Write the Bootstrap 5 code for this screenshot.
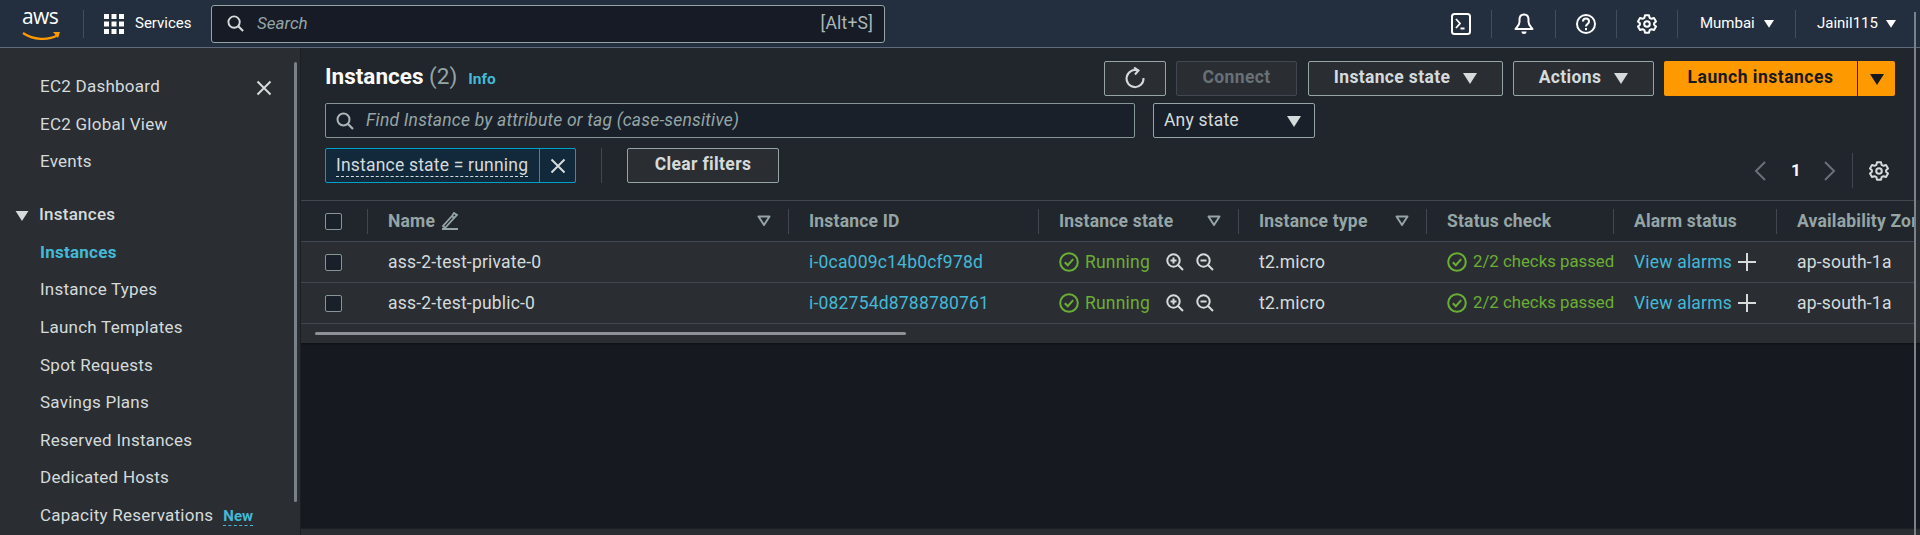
<!DOCTYPE html>
<html lang="en"><head><meta charset="utf-8"><title>Instances</title>
<link href="https://cdn.jsdelivr.net/npm/bootstrap@5.3.0/dist/css/bootstrap.min.css" rel="stylesheet">
<style>
html,body{height:535px;overflow:hidden;background:#16191f}
body{font-family:Roboto,"Liberation Sans",sans-serif;font-size:17.5px;letter-spacing:.2px;color:#d5dbdb;display:flex;flex-direction:column;position:relative}
svg{display:block;flex:none}
.topbar{height:48px;flex:none;background:#232f3e;border-bottom:1px solid #5f6b7a;padding:0;color:#fff;flex-wrap:nowrap;justify-content:flex-start}
.logo-cell{width:84px;height:28px;border-right:1px solid #414d5c;padding-left:22px;position:relative}
.aws-word{font:500 21px/19px "Open Sans","Liberation Sans",sans-serif;letter-spacing:-.6px;color:#fff;display:block;margin-top:-3px}
.swoosh{position:absolute;left:22px;top:21px}
.svc{margin-left:20px;width:107px;font-size:15px;letter-spacing:0;gap:11px}
.search-top{width:674px;height:38px;background:#161b26;border:1px solid #95a5a6;border-radius:3px;padding:0 11px 0 15px;gap:13px}
.ph{font-style:italic;color:#95a5a6}
.search-top .ph{font-size:17px;letter-spacing:0}
.hint{margin-left:auto;color:#aab7b8;font-size:17.5px}
.right-nav{margin-left:auto;height:28px}
.nav-cell{height:28px;width:62px;border-right:1px solid #414d5c}
.nav-cell.c2{width:64px}.nav-cell.c3,.nav-cell.c4{width:61px}
.region{width:118px;padding-left:22px;gap:9px;font-size:15px;letter-spacing:0;border-right:1px solid #414d5c;height:28px}
.acct{width:124px;padding-left:21px;gap:8px;font-size:15px;letter-spacing:0;height:28px}
.shell{flex:1;min-height:0;overflow:hidden}
.sidenav{width:300px;flex:none;background:#2a2e33;padding:20px 0 0 40px;position:relative;font-size:17px;letter-spacing:.25px;color:#d5dbdb}
.side-item{height:37.6px;line-height:37.6px;white-space:nowrap}
.side-gap{height:15.5px}
.side-head{margin-left:-25px;font-weight:500;gap:10px;display:flex;align-items:center}
.side-on{color:#44b9d6;font-weight:700}
.tag-new{color:#44b9d6;font-weight:700;font-size:15px;border-bottom:1px dashed #44b9d6;margin-left:10px;line-height:17px;display:inline-block;letter-spacing:0}
.side-x{position:absolute;left:256px;top:32px}
.side-rail{position:absolute;left:294px;top:14px;width:3px;height:440px;background:#7b8188;border-radius:2px}
.work{flex:1;min-width:0;background:#16191f;border-left:1px solid #1b1f26;position:relative;overflow:hidden}
.panel{background:#21252c;height:295px;overflow:hidden;box-shadow:0 1px 2px #0006}
.tools{padding:13px 25px 0 24px}
.h-row{height:35px}
.h-title{font-size:22.5px;font-weight:700;color:#fafafa;margin:0;height:35px;line-height:31px;letter-spacing:0}
.h-count{font-weight:400;color:#95a5a6}
.h-info{color:#44b9d6;font-weight:700;font-size:15.5px;margin-left:11px}
.act{height:35px;border:1px solid #95a5a6;border-radius:2px;background:#2a2e33;color:#d5dbdb;font-weight:700;font-size:17.5px;letter-spacing:.35px;padding:0 0 2px;display:flex;align-items:center;justify-content:center;gap:13px}
.act:disabled{border-color:#414750;color:#687078;opacity:1;background:#2a2e33}
.w-ref{width:62px;margin-right:10px}.w-con{width:121px;margin-right:11px}.w-st{width:195px;margin-right:10px}.w-ac{width:141px;margin-right:10px}
.launch{height:35px;width:193px;background:#f90;border:0;border-radius:2px 0 0 2px;color:#16191f;font-weight:700;font-size:17.5px;letter-spacing:.5px;padding:0 0 2px}
.launch2{height:35px;width:37px;margin-left:1px;background:#f90;border:0;border-radius:0 2px 2px 0;padding:0;display:flex;align-items:center;justify-content:center}
.row-find{margin-top:7px}
.find{width:810px;height:35px;background:#1a2029;border:1px solid #879596;border-radius:2px;padding:0 10px;gap:12px}
.any{width:162px;height:35px;background:#1a2029;border:1px solid #95a5a6;border-radius:2px;margin-left:18px;padding:0 13px 0 10px;justify-content:space-between;color:#d5dbdb}
.row-filter{margin-top:10px;height:35px}
.token{width:251px;height:35px;background:#12293b;border:1px solid #00a1c9;border-radius:2px}
.token-t{width:214px;padding-left:10px;border-right:1px solid #00a1c9;height:33px;line-height:33px;white-space:nowrap}
.token-t span{border-bottom:1px dashed #d5dbdb;padding-bottom:1px}
.token-x{flex:1;justify-content:center}
.vline{width:1px;height:35px;background:#414750;margin:0 25px 0 25px}
.w-clear{width:152px}
.pager{margin-left:auto;margin-right:6px;margin-top:5px;height:35px;color:#fafafa;font-weight:700}
.pg-n{width:18px;text-align:center;margin:0 18px 0 20px;font-size:17px}
.pg-g{height:35px;border-left:1px solid #414750;margin-left:15px;padding-left:16px}
.tbl-wrap{margin-top:17px;height:143px;background:#2a2e33;overflow:hidden;position:relative}
.instances{width:1613px;table-layout:fixed;margin:0;--bs-table-bg:transparent;--bs-table-color:#d5dbdb;border-color:#414750;font-size:17.5px}
.instances>:not(caption)>*>*{padding:0 0 0 20px;height:41px;vertical-align:middle;white-space:nowrap;overflow:hidden;border-bottom:1px solid #414750;border-top:0}
.instances thead tr{background:#21252c;border-top:1px solid #414750}
.instances thead th{color:#95a5a6;font-weight:700;position:relative}
.instances thead th::after{content:"";position:absolute;right:0;top:8px;height:25px;width:1px;background:#414750}
.instances thead th:last-child::after{display:none}
.instances .c0{padding-left:24px}
.chk{width:17px;height:17px;background:#1a2029;border:1px solid #879596;border-radius:2px;margin:0;display:block;appearance:none}
.th-in{justify-content:space-between;padding-right:18px}
.name-h{gap:6px}
.lnk{color:#44b9d6;text-decoration:none}
.ok{color:#6aaf35}
.st{gap:6px}
.st-chk{font-size:16.8px;letter-spacing:0}
.zooms{gap:12px;margin-left:10px}
.alarm{gap:6px}
.rail-h{position:absolute;left:14px;top:132px;width:591px;height:3px;background:#8d9298;border-radius:2px}
.foot{position:absolute;left:0;right:0;bottom:0;height:7px;background:#2a2e33;border-top:1px solid #1b1f26}
.rail-v{position:absolute;right:4px;top:12px;bottom:0;width:2px;background:#7b8188}
</style></head><body>
<svg width="0" height="0" class="position-absolute">
<defs>
<symbol id="tri" viewBox="0 0 14 12"><path d="M0 1h14L7 12z" fill="currentColor"/></symbol>
<symbol id="tri-o" viewBox="0 0 14 12"><path d="M1.500 1.500h11L7 10z" fill="none" stroke="currentColor" stroke-width="2" stroke-linejoin="round"/></symbol>
<symbol id="mag" viewBox="0 0 18 18"><circle cx="7.500" cy="7.500" r="6" fill="none" stroke="currentColor" stroke-width="2"/><path d="M12 12l5 5" stroke="currentColor" stroke-width="2.200" fill="none"/></symbol>
<symbol id="x" viewBox="0 0 16 16"><path d="M1.500 1.500l13 13M14.500 1.500l-13 13" stroke="currentColor" stroke-width="2" fill="none"/></symbol>
<symbol id="gear" viewBox="0 0 20 20"><path d="M8 1.200h4l.6 2.600 1.900 1 2.500-.8 2 3.400-1.900 1.800v1.600l1.900 1.800-2 3.400-2.500-.8-1.900 1-.6 2.600H8l-.6-2.600-1.900-1-2.500.8-2-3.400 1.900-1.800V9.200L1 7.400l2-3.400 2.500.8 1.900-1z" fill="none" stroke="currentColor" stroke-width="2" stroke-linejoin="round"/><circle cx="10" cy="10" r="2.800" fill="none" stroke="currentColor" stroke-width="2"/></symbol>
<symbol id="okc" viewBox="0 0 20 20"><circle cx="10" cy="10" r="8.800" fill="none" stroke="currentColor" stroke-width="2"/><path d="M5.800 10.200l3 3 5.400-6" fill="none" stroke="currentColor" stroke-width="2"/></symbol>
<symbol id="zin" viewBox="0 0 18 18"><circle cx="7.500" cy="7.500" r="6.200" fill="none" stroke="currentColor" stroke-width="2"/><path d="M12 12l5 5M7.500 4.500v6M4.500 7.500h6" stroke="currentColor" stroke-width="2" fill="none"/></symbol>
<symbol id="zout" viewBox="0 0 18 18"><circle cx="7.500" cy="7.500" r="6.200" fill="none" stroke="currentColor" stroke-width="2"/><path d="M12 12l5 5M4.500 7.500h6" stroke="currentColor" stroke-width="2" fill="none"/></symbol>
<symbol id="plus" viewBox="0 0 18 18"><path d="M9 0v18M0 9h18" stroke="currentColor" stroke-width="2" fill="none"/></symbol>
</defs></svg>

<nav class="navbar topbar d-flex align-items-center">
  <div class="logo-cell flex-none">
    <span class="aws-word">aws</span>
    <svg class="swoosh" width="40" height="12" viewBox="0 0 40 12"><path d="M1 2c10 7 25 8 35 2" fill="none" stroke="#f90" stroke-width="2.200"/><path d="M31 1h7l-2 6z" fill="#f90"/></svg>
  </div>
  <div class="svc d-flex align-items-center">
    <svg width="20" height="20" viewBox="0 0 20 20" fill="#fff"><rect width="5" height="5"/><rect x="7.500" width="5" height="5"/><rect x="15" width="5" height="5"/><rect y="7.500" width="5" height="5"/><rect x="7.500" y="7.500" width="5" height="5"/><rect x="15" y="7.500" width="5" height="5"/><rect y="15" width="5" height="5"/><rect x="7.500" y="15" width="5" height="5"/><rect x="15" y="15" width="5" height="5"/></svg>
    <span>Services</span>
  </div>
  <div class="search-top d-flex align-items-center">
    <svg width="17" height="17" style="color:#d5dbdb"><use href="#mag"/></svg>
    <span class="ph">Search</span><span class="hint">[Alt+S]</span>
  </div>
  <div class="right-nav d-flex align-items-center">
    <div class="nav-cell d-flex align-items-center justify-content-center"><svg width="20" height="22" viewBox="0 0 20 22"><rect x="1" y="1" width="18" height="20" rx="2.500" fill="none" stroke="#fff" stroke-width="2"/><path d="M5 6l4 4.500-4 4.500M9.500 15.500h4" fill="none" stroke="#fff" stroke-width="1.800"/></svg></div>
    <div class="nav-cell c2 d-flex align-items-center justify-content-center"><svg width="20" height="22" viewBox="0 0 20 22"><path d="M10 1.500c-3 0-4.500 2.300-4.500 5v2.500C5.500 12 3 14 1.500 16h17c-1.500-2-4-4-4-7V6.500c0-2.700-1.500-5-4.500-5z" fill="none" stroke="#fff" stroke-width="2" stroke-linejoin="round"/><path d="M7.500 18.500a2.500 2.500 0 005 0z" fill="#fff"/></svg></div>
    <div class="nav-cell c3 d-flex align-items-center justify-content-center"><svg width="20" height="20" viewBox="0 0 20 20"><circle cx="10" cy="10" r="9" fill="none" stroke="#fff" stroke-width="2"/><path d="M7 7.500c0-4 6-4 6 0 0 2.500-3 2.500-3 5" fill="none" stroke="#fff" stroke-width="2"/><rect x="9" y="14" width="2" height="2.200" fill="#fff"/></svg></div>
    <div class="nav-cell c4 d-flex align-items-center justify-content-center"><svg width="20" height="20" style="color:#fff"><use href="#gear"/></svg></div>
    <div class="region d-flex align-items-center"><span>Mumbai</span><svg width="10" height="9" style="color:#fff"><use href="#tri"/></svg></div>
    <div class="acct d-flex align-items-center"><span>Jainil115</span><svg width="10" height="9" style="color:#fff"><use href="#tri"/></svg></div>
  </div>
</nav>

<div class="shell d-flex">
  <aside class="sidenav">
    <div class="side-item">EC2 Dashboard</div>
    <div class="side-item">EC2 Global View</div>
    <div class="side-item">Events</div>
    <div class="side-gap"></div>
    <div class="side-item side-head"><svg width="14" height="11" style="color:#d5dbdb"><use href="#tri"/></svg><span>Instances</span></div>
    <div class="side-item side-on">Instances</div>
    <div class="side-item">Instance Types</div>
    <div class="side-item">Launch Templates</div>
    <div class="side-item">Spot Requests</div>
    <div class="side-item">Savings Plans</div>
    <div class="side-item">Reserved Instances</div>
    <div class="side-item">Dedicated Hosts</div>
    <div class="side-item">Capacity Reservations<span class="tag-new">New</span></div>
    <svg class="side-x" width="16" height="16"><use href="#x"/></svg>
    <div class="side-rail"></div>
  </aside>
  <main class="work">
    <div class="panel">
      <div class="tools">
        <div class="d-flex align-items-start h-row">
          <h1 class="h-title">Instances <span class="h-count">(2)</span><span class="h-info">Info</span></h1>
          <div class="d-flex ms-auto">
            <button class="btn act w-ref" aria-label="Refresh"><svg width="22" height="22" viewBox="0 0 22 22"><path d="M13.500 3.500A8.500 8.500 0 1019.500 11" fill="none" stroke="#d5dbdb" stroke-width="2"/><path d="M10 .5l4.500 3-3.500 4" fill="none" stroke="#d5dbdb" stroke-width="2"/></svg></button>
            <button class="btn act w-con" disabled>Connect</button>
            <button class="btn act w-st">Instance state <svg width="14" height="12"><use href="#tri"/></svg></button>
            <button class="btn act w-ac">Actions <svg width="14" height="12"><use href="#tri"/></svg></button>
            <button class="btn launch">Launch instances</button>
            <button class="btn launch2" aria-label="More"><svg width="14" height="12" style="color:#16191f"><use href="#tri"/></svg></button>
          </div>
        </div>
        <div class="d-flex row-find">
          <div class="find d-flex align-items-center"><svg width="18" height="18" style="color:#aab7b8"><use href="#mag"/></svg><span class="ph">Find Instance by attribute or tag (case-sensitive)</span></div>
          <div class="any d-flex align-items-center"><span>Any state</span><svg width="14" height="12"><use href="#tri"/></svg></div>
        </div>
        <div class="d-flex row-filter">
          <div class="token d-flex align-items-center"><div class="token-t"><span>Instance state = running</span></div><div class="token-x d-flex"><svg width="16" height="16"><use href="#x"/></svg></div></div>
          <div class="vline"></div>
          <button class="btn act w-clear">Clear filters</button>
          <div class="pager d-flex align-items-center">
            <svg width="14" height="22" viewBox="0 0 14 22" style="color:#687078"><path d="M12 2L3 11l9 9" fill="none" stroke="currentColor" stroke-width="2"/></svg>
            <span class="pg-n">1</span>
            <svg width="14" height="22" viewBox="0 0 14 22" style="color:#687078"><path d="M2 2l9 9-9 9" fill="none" stroke="currentColor" stroke-width="2"/></svg>
            <div class="pg-g d-flex align-items-center"><svg width="20" height="20" style="color:#d5dbdb"><use href="#gear"/></svg></div>
          </div>
        </div>
      </div>
      <div class="tbl-wrap">
        <table class="table instances">
          <colgroup><col style="width:67px"><col style="width:421px"><col style="width:250px"><col style="width:200px"><col style="width:188px"><col style="width:187px"><col style="width:163px"><col style="width:137px"></colgroup>
          <thead><tr>
            <th class="c0"><input class="chk" type="checkbox" aria-label="all"></th>
            <th><div class="d-flex align-items-center th-in"><span class="d-flex align-items-center name-h">Name <svg width="18" height="18" viewBox="0 0 18 18"><path d="M2 14l2 2 9-10-2-2zM11 4l2-3 3 2-3 3M1 17h16" fill="none" stroke="#95a5a6" stroke-width="1.800"/></svg></span><svg width="14" height="12"><use href="#tri-o"/></svg></div></th>
            <th>Instance ID</th>
            <th><div class="d-flex align-items-center th-in"><span>Instance state</span><svg width="14" height="12"><use href="#tri-o"/></svg></div></th>
            <th><div class="d-flex align-items-center th-in"><span>Instance type</span><svg width="14" height="12"><use href="#tri-o"/></svg></div></th>
            <th>Status check</th><th>Alarm status</th><th>Availability Zone</th>
          </tr></thead>
          <tbody>
            <tr><td class="c0"><input class="chk" type="checkbox" aria-label="row"></td><td>ass-2-test-private-0</td><td><a class="lnk" href="#">i-0ca009c14b0cf978d</a></td>
              <td><div class="d-flex align-items-center st ok"><svg width="20" height="20"><use href="#okc"/></svg><span>Running</span><div class="d-flex zooms" style="color:#d5dbdb"><svg width="18" height="18"><use href="#zin"/></svg><svg width="18" height="18"><use href="#zout"/></svg></div></div></td>
              <td>t2.micro</td><td><div class="d-flex align-items-center st ok"><svg width="20" height="20"><use href="#okc"/></svg><span class="st-chk">2/2 checks passed</span></div></td>
              <td><div class="d-flex align-items-center alarm"><a class="lnk" href="#">View alarms</a><svg width="18" height="18"><use href="#plus"/></svg></div></td><td>ap-south-1a</td></tr>
            <tr><td class="c0"><input class="chk" type="checkbox" aria-label="row"></td><td>ass-2-test-public-0</td><td><a class="lnk" href="#">i-082754d8788780761</a></td>
              <td><div class="d-flex align-items-center st ok"><svg width="20" height="20"><use href="#okc"/></svg><span>Running</span><div class="d-flex zooms" style="color:#d5dbdb"><svg width="18" height="18"><use href="#zin"/></svg><svg width="18" height="18"><use href="#zout"/></svg></div></div></td>
              <td>t2.micro</td><td><div class="d-flex align-items-center st ok"><svg width="20" height="20"><use href="#okc"/></svg><span class="st-chk">2/2 checks passed</span></div></td>
              <td><div class="d-flex align-items-center alarm"><a class="lnk" href="#">View alarms</a><svg width="18" height="18"><use href="#plus"/></svg></div></td><td>ap-south-1a</td></tr>
          </tbody>
        </table>
        <div class="rail-h"></div>
      </div>
    </div>
    <div class="foot"></div>
  </main>
</div>
<div class="rail-v"></div>
<script src="https://cdn.jsdelivr.net/npm/bootstrap@5.3.0/dist/js/bootstrap.bundle.min.js"></script>
</body></html>
